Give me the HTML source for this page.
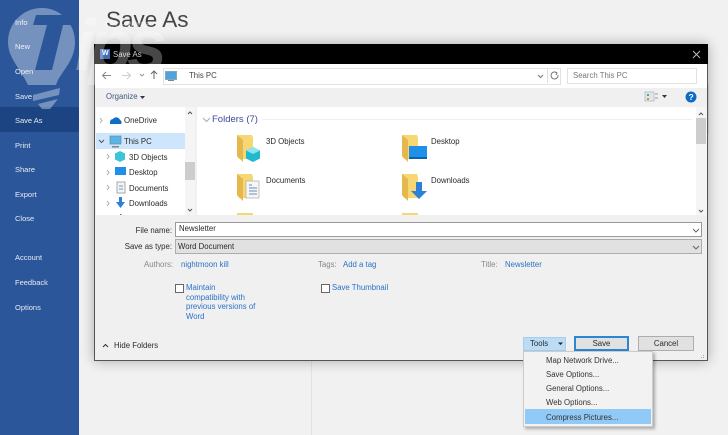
<!DOCTYPE html>
<html><head><meta charset="utf-8"><style>
html,body{margin:0;padding:0;width:728px;height:435px;overflow:hidden;background:#f1f1f1}
#r{position:relative;width:728px;height:435px;overflow:hidden;font-family:"Liberation Sans",sans-serif;font-size:7.8px;color:#333;filter:blur(.35px)}
#r div{position:absolute;white-space:nowrap;font-size:7.8px;line-height:14px;color:#2a2a2a}
#r div.s{left:15px;color:#e6ebf3;font-size:7.5px}
#r div.b{color:#2a72c8}
#r div.g{color:#888}
#r div.btn{background:#e1e1e1;border:1px solid #adadad;text-align:center;box-sizing:border-box}
#r div.m{left:546px;color:#333}
svg{position:absolute;overflow:visible}
</style></head><body><div id="r">
<div style="left:0;top:0;width:79px;height:435px;background:#2b579a"></div>
<div style="left:0;top:107px;width:79px;height:25px;background:#1c4482"></div>
<div style="left:311px;top:360px;width:1px;height:75px;background:#e2e2e2"></div>
<div style="left:708px;top:84px;width:1px;height:50px;background:#ddd"></div>
<div class="s" style="top:16px">Info</div><div class="s" style="top:40px">New</div><div class="s" style="top:65px">Open</div><div class="s" style="top:90px">Save</div><div class="s" style="top:114px">Save As</div><div class="s" style="top:139px">Print</div><div class="s" style="top:163px">Share</div><div class="s" style="top:188px">Export</div><div class="s" style="top:212px">Close</div><div class="s" style="top:251px">Account</div><div class="s" style="top:276px">Feedback</div><div class="s" style="top:301px">Options</div>
<div style="left:106px;top:5px;font-size:22.5px;line-height:30px;color:#444">Save As</div>

<div style="left:94px;top:44px;width:614px;height:317px;box-sizing:border-box;background:#f0f0f0;box-shadow:0 0 12px rgba(0,0,0,.3);border:1px solid #555"></div>
<div style="left:94px;top:44px;width:614px;height:20px;background:#000"></div>
<div style="left:100px;top:49px;width:10px;height:10px;background:#3f6db5"></div>
<div style="left:102px;top:48px;font-size:7px;line-height:12px;color:#fff;font-weight:bold">W</div>
<div style="left:113px;top:49px;line-height:11px;color:#ccc">Save As</div>
<svg style="left:0;top:0" width="728" height="435"><path d="M693 51l7 7M700 51l-7 7" stroke="#bbb" fill="none"/></svg>

<div style="left:95px;top:64px;width:612px;height:24px;background:#fff"></div>
<svg style="left:0;top:0" width="728" height="435" fill="none" stroke="#888">
<path d="M103 75.500h8M106 72l-3.500 3.500l3.500 3.500"/><path d="M122 75.500h8M127 72l3.500 3.500l-3.500 3.500" stroke="#ccc"/>
<path d="M140 74l2 2l2-2" stroke="#999"/><path d="M154 79v-8M151 74l3-3l3 3" stroke="#666"/>
<path d="M181 74l2 2l-2 2M222 74l2 2l-2 2" stroke="#999"/>
</svg>
<div style="left:163px;top:68px;width:396px;height:15px;border:1px solid #e2e2e2;background:#fff"></div>
<div style="left:165px;top:71px;width:10px;height:7px;background:#4ba3df;border:1px solid #8aa"></div>
<div style="left:168px;top:80px;width:6px;height:1px;background:#789"></div>
<div style="left:189px;top:69px;color:#444">This PC</div>
<div style="left:547px;top:69px;width:1px;height:14px;background:#ddd"></div>
<svg style="left:0;top:0" width="728" height="435" fill="none" stroke="#777">
<path d="M538 75l2.500 2.500l2.500-2.500"/><path d="M557 73a3.500 3.500 0 1 0 1 2M555 72l2 1l-1 2"/>
<circle cx="689" cy="75" r="2.200"/><path d="M687 77l-2.500 2.500"/></svg>
<div style="left:567px;top:68px;width:128px;height:14px;border:1px solid #e2e2e2;background:#fff"></div>
<div style="left:573px;top:69px;color:#777">Search This PC</div>

<div style="left:95px;top:88px;width:612px;height:19px;background:#f0f0f0"></div>
<div style="left:106px;top:90px;color:#3d5a80">Organize</div>
<svg style="left:0;top:0" width="728" height="435"><path d="M140 96h5l-2.500 3z" fill="#334"/><path d="M662 95h5l-2.500 3z" fill="#334"/>
<rect x="645" y="92" width="9" height="9" fill="#dfe7ee" stroke="#aaa" stroke-width=".6"/><rect x="647" y="94" width="2" height="2" fill="#4a8"/><rect x="647" y="98" width="2" height="2" fill="#c93"/><path d="M655 94h3M655 98h3" stroke="#999"/>
<circle cx="691" cy="97" r="5.500" fill="#0c6cc4"/></svg>
<div style="left:688.500px;top:92px;font-size:8.500px;font-weight:bold;color:#fff;line-height:10px">?</div>

<div style="left:96px;top:107px;width:99px;height:108px;background:#fff"></div>
<div style="left:197px;top:107px;width:510px;height:108px;background:#fff"></div>
<div style="left:96px;top:133px;width:89px;height:16px;background:#cde6fb"></div>
<div style="left:185px;top:107px;width:10px;height:108px;background:#f5f5f5"></div>
<div style="left:185px;top:162px;width:10px;height:18px;background:#cdcdcd"></div>
<div style="left:696px;top:107px;width:11px;height:108px;background:#f5f5f5"></div>
<div style="left:696px;top:118px;width:10px;height:26px;background:#cdcdcd"></div>
<svg style="left:0;top:0" width="728" height="435" fill="none" stroke="#777">
<path d="M188 114l2-2l2 2M188 209l2 2l2-2M699 115l2-2l2 2M699 210l2 2l2-2" stroke="#555"/>
<path d="M100 118l2 2.500l-2 2.500M107 154l2 2.500l-2 2.500M107 170l2 2.500l-2 2.500M107 185l2 2.500l-2 2.500M107 201l2 2.500l-2 2.500" stroke="#aaa"/>
<path d="M99 140l2.500 2.500l2.500-2.500" stroke="#555"/>
<path d="M203 118l3.500 3.500l3.500-3.500" stroke="#aaa"/>
</svg>
<div style="left:124px;top:114px">OneDrive</div>
<div style="left:124px;top:135px">This PC</div>
<div style="left:129px;top:151px">3D Objects</div>
<div style="left:129px;top:166px">Desktop</div>
<div style="left:129px;top:182px">Documents</div>
<div style="left:129px;top:197px">Downloads</div>
<svg style="left:0;top:0" width="728" height="435">
<path d="M110 122a3 3 0 0 1 3-3a4 4 0 0 1 7 1a2.500 2.500 0 0 1 1 4h-11z" fill="#0f6fc6"/>
<rect x="110" y="136" width="11" height="8" fill="#59b4e8" stroke="#789" stroke-width=".7"/><rect x="112" y="146" width="7" height="1.500" fill="#789"/>
<path d="M120 151l5 2.500v6l-5 2.500l-5-2.500v-6z" fill="#3cc4d8"/>
<rect x="115" y="167" width="11" height="8" fill="#1e90e8"/>
<rect x="117" y="182" width="8" height="11" fill="#f4f4f4" stroke="#aaa"/><path d="M119 186h4M119 189h4" stroke="#5aa0d8"/>
<path d="M119 197h3v5h3l-4.500 6l-4.500-6h3z" fill="#2b80d8"/>
<rect x="120" y="214" width="1.500" height="1" fill="#2b80d8"/>
</svg>
<div style="left:212px;top:113px;font-size:9.500px;line-height:13px;color:#3a4a9a">Folders (7)</div>
<div style="left:262px;top:119px;width:430px;height:1px;background:#efefef"></div>
<svg style="left:0;top:0" width="728" height="435">
<path d="M237 135h15l1 3v21h-14l-2-3z" fill="#f7d774"/><path d="M237 135l6 5v22l-6-6z" fill="#e5b84e"/>
<path d="M402 135h15l1 3v21h-14l-2-3z" fill="#f7d774"/><path d="M402 135l6 5v22l-6-6z" fill="#e5b84e"/>
<path d="M237 174h15l1 3v21h-14l-2-3z" fill="#f7d774"/><path d="M237 174l6 5v22l-6-6z" fill="#e5b84e"/>
<path d="M402 174h15l1 3v21h-14l-2-3z" fill="#f7d774"/><path d="M402 174l6 5v22l-6-6z" fill="#e5b84e"/>
<rect x="237" y="213" width="16" height="2" fill="#f7d774"/><rect x="402" y="213" width="16" height="2" fill="#f7d774"/>
<path d="M253 147l7 3.500v8l-7 3.500l-7-3.500v-8z" fill="#24b8cf"/><path d="M246 150.500l7-3.500l7 3.500l-7 3.500z" fill="#8be4ee"/>
<rect x="409" y="146" width="18" height="13" fill="#1e90e8"/><rect x="409" y="157" width="18" height="2" fill="#0a62b0"/>
<rect x="246" y="181" width="13" height="17" fill="#f6f6f6" stroke="#aaa" stroke-width=".7"/><path d="M249 185h3M249 188h8M249 191h8M249 194h8" stroke="#6a8fb8"/>
<path d="M416 182h6v9h5l-8 8l-8-8h5z" fill="#2b80d8"/>
</svg>
<div style="left:266px;top:135px">3D Objects</div>
<div style="left:431px;top:135px">Desktop</div>
<div style="left:266px;top:174px">Documents</div>
<div style="left:431px;top:174px">Downloads</div>

<div style="right:556px;top:224px">File name:</div>
<div style="right:556px;top:240px">Save as type:</div>
<div style="left:175px;top:222px;width:527px;height:15px;box-sizing:border-box;border:1px solid #999;background:#fff"></div>
<div style="left:179px;top:222px">Newsletter</div>
<div style="left:175px;top:239px;width:527px;height:15px;box-sizing:border-box;border:1px solid #adadad;background:#e1e1e1"></div>
<div style="left:178px;top:240px">Word Document</div>
<svg style="left:0;top:0" width="728" height="435" fill="none" stroke="#666"><path d="M693 229l3 3l3-3M693 246l3 3l3-3"/></svg>
<div class="g" style="left:144px;top:258px">Authors:</div>
<div class="b" style="left:181px;top:258px">nightmoon kill</div>
<div class="g" style="left:318px;top:258px">Tags:</div>
<div class="b" style="left:343px;top:258px">Add a tag</div>
<div class="g" style="left:481px;top:258px">Title:</div>
<div class="b" style="left:505px;top:258px">Newsletter</div>
<div style="left:175px;top:284px;width:9px;height:9px;box-sizing:border-box;border:1px solid #666;background:#fff"></div>
<div class="b" style="left:186px;top:283px;line-height:9.700px">Maintain<br>compatibility with<br>previous versions of<br>Word</div>
<div style="left:321px;top:284px;width:9px;height:9px;box-sizing:border-box;border:1px solid #666;background:#fff"></div>
<div class="b" style="left:332px;top:283px;line-height:10px">Save Thumbnail</div>
<svg style="left:0;top:0" width="728" height="435" fill="none" stroke="#333"><path d="M103 347l2.500-2.500l2.500 2.500"/></svg>
<div style="left:114px;top:339px">Hide Folders</div>
<div style="left:523px;top:337px;width:43px;height:14px;background:#bcdcf6;border:1px solid #a5cdec;box-sizing:border-box"></div>
<div style="left:530px;top:337px">Tools</div>
<svg style="left:0;top:0" width="728" height="435"><path d="M558 342.500h5l-2.500 2.500z" fill="#222"/><path d="M703 355h1v1h-1zM701 357h1v1h-1zM703 357h1v1h-1z" fill="#aaa"/></svg>
<div class="btn" style="left:574px;top:336px;width:55px;height:15px;border:2px solid #2c86d1;line-height:11px">Save</div>
<div class="btn" style="left:638px;top:336px;width:56px;height:15px;line-height:13px">Cancel</div>

<div style="left:523px;top:351px;width:130px;height:76px;background:#f2f2f2;border:1px solid #ccc;box-sizing:border-box;box-shadow:2px 2px 3px rgba(0,0,0,.3)"></div>
<div style="left:525px;top:409px;width:126px;height:15px;background:#91c9f7"></div>
<div class="m" style="top:354px">Map Network Drive...</div>
<div class="m" style="top:368px">Save Options...</div>
<div class="m" style="top:382px">General Options...</div>
<div class="m" style="top:396px">Web Options...</div>
<div class="m" style="top:411px">Compress Pictures...</div>

<svg style="left:0;top:0" width="728" height="435">
<path d="M42 8C23 8 8 23 8 42C8 58 20 68 28 85L56 85C60 72 75 62 75 42C75 23 60 8 42 8Z" fill="#fff" opacity=".35"/>
<path d="M33 95l27-7l-1 7l-26 6zM38 104l20-5l-8 10h-8z" fill="#fff" opacity=".35"/>
<path d="M36 15L79 15L77 25L63 25L52 70L35 70L47 25L33 25Z" fill="#2b579a"/>
</svg>
<div style="left:75px;top:10px;font-size:72px;line-height:72px;font-style:italic;font-weight:bold;color:#fff;opacity:.28;letter-spacing:-6px">ips</div>
<div style="left:104px;top:21px;font-size:7px;line-height:9px;color:#fff;opacity:.5;letter-spacing:1px">TECHWARE</div>
</div></body></html>
